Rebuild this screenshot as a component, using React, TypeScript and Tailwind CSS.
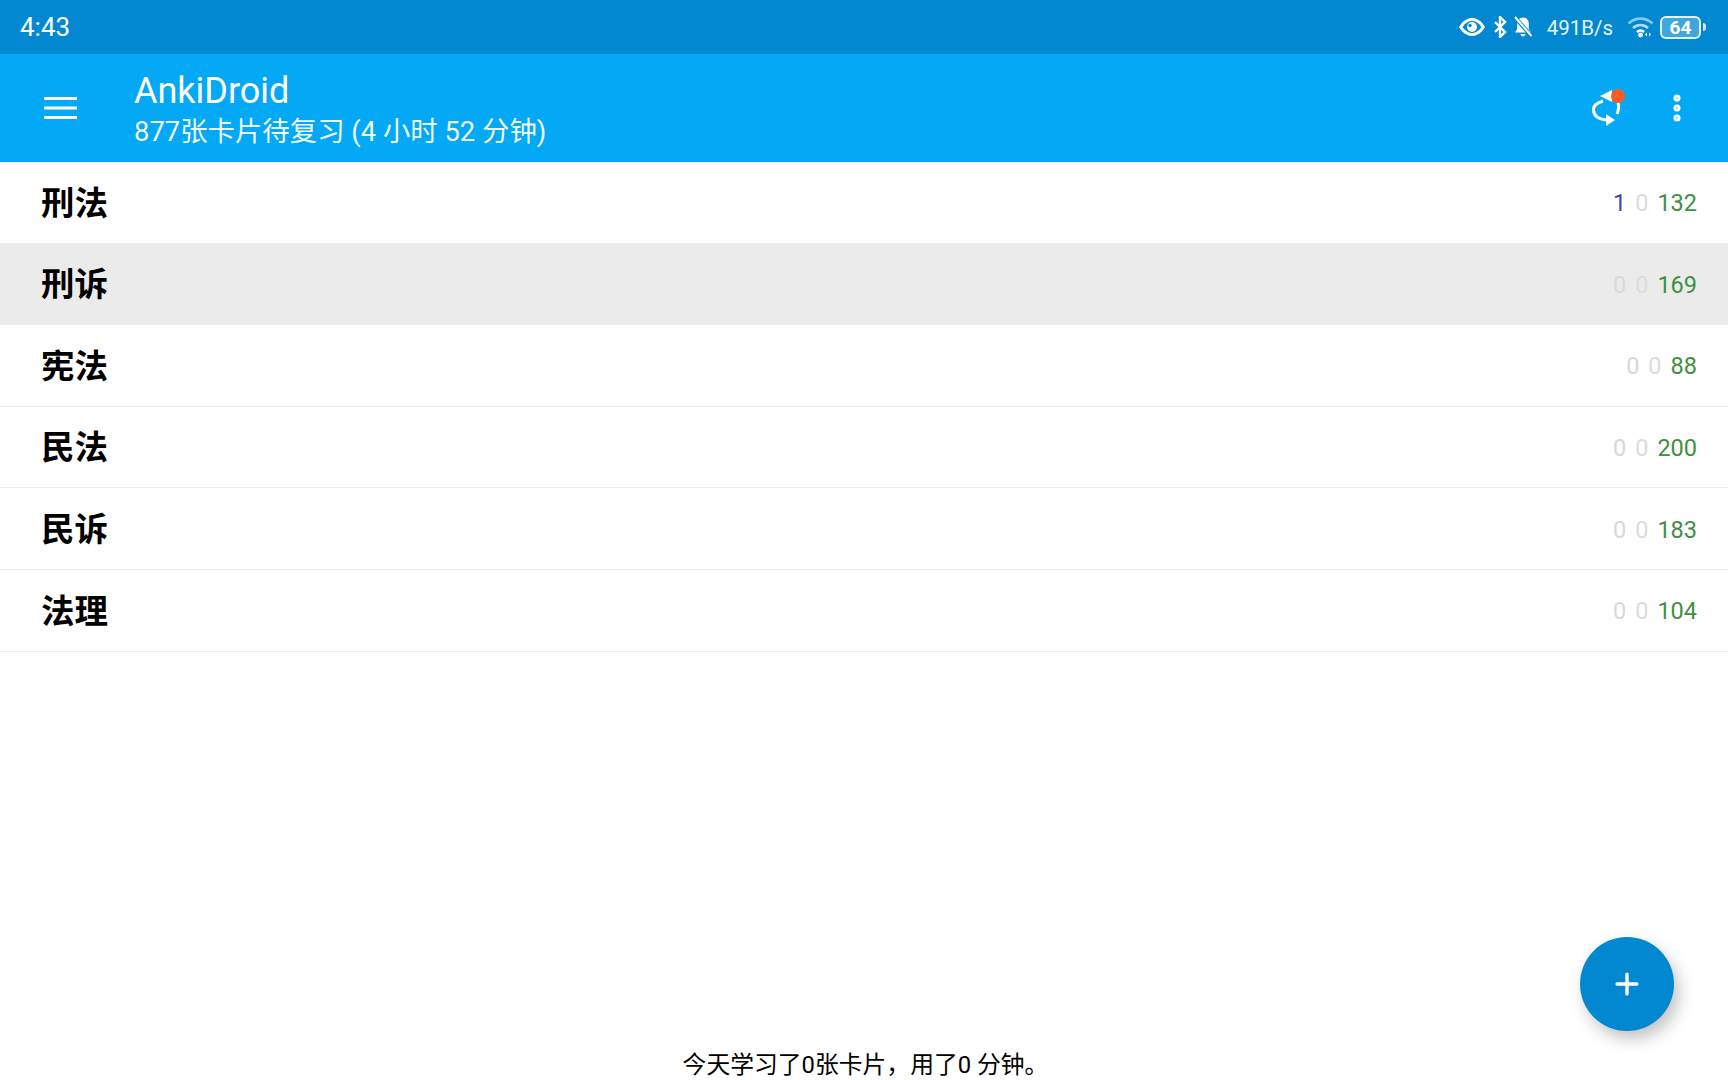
import { Plus, EllipsisVertical } from "lucide-react";

const FONT = "font-['Roboto','Noto_Sans_CJK_SC',sans-serif]";

const decks = [
  { name: "刑法", learn: 1, review: 0, fresh: 132 },
  { name: "刑诉", learn: 0, review: 0, fresh: 169, active: true },
  { name: "宪法", learn: 0, review: 0, fresh: 88 },
  { name: "民法", learn: 0, review: 0, fresh: 200 },
  { name: "民诉", learn: 0, review: 0, fresh: 183 },
  { name: "法理", learn: 0, review: 0, fresh: 104 },
];

function EyeIcon() {
  return (
    <svg width="28" height="20" viewBox="0 0 28 20">
      <path d="M1 10C5 3.500 9.500 1 14 1s9 2.500 13 9c-4 6.500-8.500 9-13 9S5 16.500 1 10z" fill="white" />
      <path d="M4.500 10C7.500 5.800 10.500 4 14 4s6.500 1.800 9.500 6c-3 4.200-6 6-9.500 6s-6.500-1.800-9.500-6z" fill="#0288d1" />
      <circle cx="14" cy="10" r="5" fill="white" />
      <circle cx="12" cy="8.500" r="1.700" fill="#0288d1" />
    </svg>
  );
}

function BluetoothMuted() {
  return (
    <svg width="14" height="22" viewBox="0 0 14 22" fill="none" stroke="white" strokeWidth="2.400">
      <path d="M2 6l10 10-5 5V1l5 5L2 16" />
    </svg>
  );
}

function BellMuted() {
  return (
    <svg width="20" height="22" viewBox="0 0 20 22">
      <path d="M10 1.500c-3.800 0-5.800 3-5.800 6.500v5L2 16.500h16L15.800 13V8c0-3.500-2-6.500-5.800-6.500z" fill="white" />
      <path d="M7.500 18h5c-.3 1.500-1.200 2.500-2.500 2.500S7.800 19.500 7.500 18z" fill="white" />
      <path d="M2 1.500l16 18" stroke="#0288d1" strokeWidth="4" />
      <path d="M2 1l16.500 19" stroke="white" strokeWidth="2" />
    </svg>
  );
}

function WifiIcon() {
  return (
    <svg width="28" height="22" viewBox="0 0 28 22" fill="none">
      <path d="M1.500 7.500C8.500 1 18.500 1 25.500 7.500" stroke="#81c9f0" strokeWidth="2.600" />
      <path d="M6 12c4.500-4 10.500-4 15 0" stroke="#b3dff5" strokeWidth="2.600" />
      <path d="M10 16c2-1.800 5-1.800 7 0" stroke="white" strokeWidth="2.600" />
      <circle cx="13.500" cy="19" r="2.400" fill="white" />
      <path d="M20 16.500v4l-2-2zM22 16.500v4l2-2z" fill="white" />
    </svg>
  );
}

function MenuIcon() {
  return (
    <svg width="33" height="24" viewBox="0 0 33 24" fill="white" className="block">
      <rect x="0" y="1" width="33" height="3" />
      <rect x="0" y="10.500" width="33" height="3" />
      <rect x="0" y="20" width="33" height="3" />
    </svg>
  );
}

function SyncIcon() {
  return (
    <svg width="34" height="40" viewBox="0 0 34 40" fill="none" className="block">
      <path d="M21 8h6" stroke="white" strokeWidth="3" />
      <path d="M22 2v12L10 8z" fill="white" />
      <path d="M13 13Q3 16 3.500 22Q4 31 17 32" stroke="white" strokeWidth="3" />
      <path d="M16 26v12l9-6z" fill="white" />
      <path d="M28 15Q29.500 20 27 26" stroke="white" strokeWidth="3" />
    </svg>
  );
}

function DeckRow({ name, learn, review, fresh, active }: { name: string; learn: number; review: number; fresh: number; active?: boolean }) {
  return (
    <div className={`flex h-[81.6px] shrink-0 items-center justify-between border-b border-[#ededed] pl-[41px] pr-[31px] ${active ? "bg-[#ebebeb]" : "bg-white"}`}>
      <span className="pt-[3px] text-[33.500px] font-bold text-black">{name}</span>
      <div className="flex gap-[9px] pt-[3px] text-[23.500px]">
        <span className={learn > 0 ? "text-[#42479a]" : "text-[#d8d8d8]"}>{learn}</span>
        <span className="text-[#dcdcdc]">{review}</span>
        <span className="text-[#3f8f44]">{fresh}</span>
      </div>
    </div>
  );
}

export default function App() {
  return (
    <div className={`relative flex h-screen flex-col overflow-hidden bg-white ${FONT}`}>
      <div className="flex h-[54px] shrink-0 items-center justify-between bg-[#0288d1] pl-5 pr-[22px] text-white">
        <span className="pt-[1px] text-[26px]">4:43</span>
        <div className="flex items-center">
          <EyeIcon />
          <span className="ml-[7px]"><BluetoothMuted /></span>
          <span className="ml-[6px]"><BellMuted /></span>
          <span className="ml-[14px] pt-[2px] text-[20.500px] text-white/90">491B/s</span>
          <span className="ml-[14px]"><WifiIcon /></span>
          <div className="ml-[5px] flex h-[23px] w-[41px] items-center justify-center rounded-[6px] border-2 border-white/85 bg-white/25 text-[19px] font-bold leading-none">64</div>
          <div className="ml-[2px] h-[8px] w-[3px] rounded-r-sm bg-white/80" />
        </div>
      </div>

      <div className="flex h-[108px] shrink-0 items-center bg-[#03a9f4] text-white">
        <div className="flex w-[134px] shrink-0 pl-[44px]">
          <MenuIcon />
        </div>
        <div className="min-w-0 flex-1 pt-[3px]">
          <div className="text-[36px] leading-[40px]">AnkiDroid</div>
          <div className="mt-[4px] text-[27.400px] leading-[34px] text-white/95">877张卡片待复习 (4 小时 52 分钟)</div>
        </div>
        <div className="relative mr-[36px]">
          <SyncIcon />
          <span className="absolute -right-[1px] top-[1px] h-[14px] w-[14px] rounded-full bg-[#ff5a1f]" />
        </div>
        <EllipsisVertical size={34} strokeWidth={3} className="mr-[34px]" />
      </div>

      <div className="flex flex-1 flex-col">
        {decks.map((deck) => (
          <DeckRow key={deck.name} {...deck} />
        ))}
      </div>

      <div className="shrink-0 pl-[3px] text-center text-[23.800px] leading-[30px] text-black">今天学习了0张卡片，用了0 分钟。</div>

      <button className="absolute bottom-[49px] right-[54px] flex h-[94px] w-[94px] items-center justify-center rounded-full bg-[#0288d1] text-white shadow-[5px_8px_16px_rgba(0,0,0,0.24)]">
        <Plus size={34} strokeWidth={2.400} />
      </button>
    </div>
  );
}
